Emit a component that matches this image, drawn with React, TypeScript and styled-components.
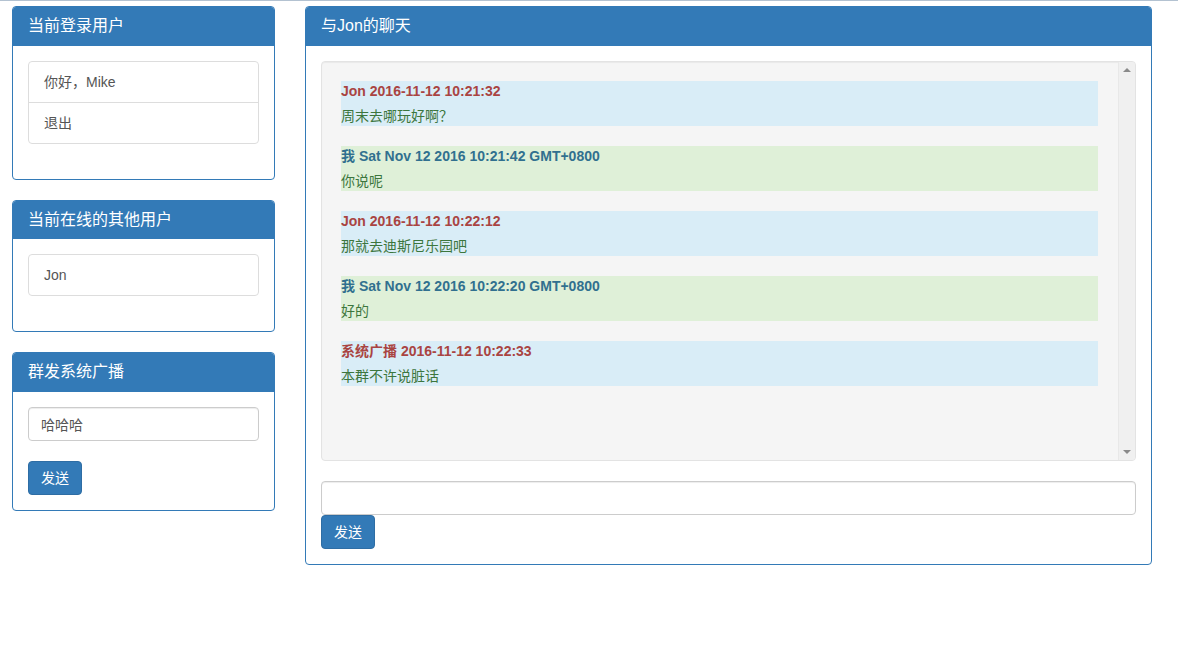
import React from "react";
import styled, { createGlobalStyle } from "styled-components";

const GlobalStyle = createGlobalStyle`
  * { box-sizing: border-box; }
  html, body { margin: 0; padding: 0; background: #fff; }
  body {
    border-top: 1px solid #b3c2d1;
    font-family: "Liberation Sans", Arial, "Noto Sans CJK SC", sans-serif;
    font-size: 14px;
    line-height: 20px;
    color: #333;
  }
`;

const Page = styled.div`
  display: flex;
  align-items: flex-start;
  gap: 30px;
  padding: 5px 0 0 12px;
`;

const Column = styled.div<{ $width: number }>`
  width: ${(p) => p.$width}px;
  display: flex;
  flex-direction: column;
  gap: 20px;
`;

const Panel = styled.div`
  border: 1px solid #337ab7;
  border-radius: 4px;
  background: #fff;
  overflow: hidden;
`;

const PanelHeading = styled.div<{ $height?: number }>`
  background: #337ab7;
  color: #fff;
  padding: 10px 15px;
  height: ${(p) => p.$height ?? 39}px;
  font-size: 16px;
  line-height: 18px;
  font-family: "Liberation Sans", Arial, "Noto Sans CJK SC", sans-serif;
`;

const PanelBody = styled.div`
  padding: 15px;
`;

const ListGroup = styled.div`
  border: 1px solid #ddd;
  border-radius: 4px;
  margin-bottom: 20px;
`;

const ListItem = styled.div`
  padding: 10px 15px;
  line-height: 20px;
  color: #555;
  & + & { border-top: 1px solid #ddd; }
`;

const TextInput = styled.input`
  display: block;
  width: 100%;
  height: 34px;
  padding: 6px 12px;
  font-size: 14px;
  font-family: "Liberation Sans", Arial, "Noto Sans CJK SC", sans-serif;
  color: #555;
  border: 1px solid #ccc;
  border-radius: 4px;
  box-shadow: inset 0 1px 1px rgba(0, 0, 0, 0.075);
  outline: none;
`;

const FormGroup = styled.div`
  margin-bottom: 20px;
`;

const Button = styled.button`
  display: block;
  height: 34px;
  padding: 6px 12px;
  font-size: 14px;
  line-height: 20px;
  font-family: "Liberation Sans", Arial, "Noto Sans CJK SC", sans-serif;
  color: #fff;
  background: #337ab7;
  border: 1px solid #2e6da4;
  border-radius: 4px;
`;

const Well = styled.div`
  display: flex;
  height: 400px;
  background: #f5f5f5;
  border: 1px solid #e3e3e3;
  border-radius: 4px;
  box-shadow: inset 0 1px 1px rgba(0, 0, 0, 0.05);
  margin-bottom: 20px;
  overflow: hidden;
`;

const MessageList = styled.div`
  flex: 1;
  padding: 19px 20px 19px 19px;
  display: flex;
  flex-direction: column;
  gap: 20px;
`;

const ScrollTrack = styled.div`
  width: 17px;
  background: #f0f0f0;
  border-left: 1px solid #e8e8e8;
  display: flex;
  flex-direction: column;
  justify-content: space-between;
  align-items: center;
  padding: 6px 0;
`;

const Arrow = styled.div<{ $down?: boolean }>`
  width: 0;
  height: 0;
  border-left: 4px solid transparent;
  border-right: 4px solid transparent;
  ${(p) =>
    p.$down
      ? "border-top: 4px solid #8a8a8a;"
      : "border-bottom: 4px solid #8a8a8a;"}
`;

const Message = styled.div<{ $kind: "info" | "success" }>`
  background: ${(p) => (p.$kind === "info" ? "#d9edf7" : "#dff0d8")};
  height: 45px;
`;

const MessageHead = styled.div<{ $kind: "info" | "success" }>`
  font-weight: bold;
  color: ${(p) => (p.$kind === "info" ? "#a94442" : "#31708f")};
  line-height: 20px;
  margin-bottom: 5px;
`;

const MessageBody = styled.div`
  color: #3c763d;
  line-height: 20px;
`;

const messages: { kind: "info" | "success"; head: string; body: string }[] = [
  { kind: "info", head: "Jon 2016-11-12 10:21:32", body: "周末去哪玩好啊？" },
  { kind: "success", head: "我 Sat Nov 12 2016 10:21:42 GMT+0800", body: "你说呢" },
  { kind: "info", head: "Jon 2016-11-12 10:22:12", body: "那就去迪斯尼乐园吧" },
  { kind: "success", head: "我 Sat Nov 12 2016 10:22:20 GMT+0800", body: "好的" },
  { kind: "info", head: "系统广播 2016-11-12 10:22:33", body: "本群不许说脏话" },
];

export default function App() {
  return (
    <>
      <GlobalStyle />
      <Page>
        <Column $width={263}>
          <Panel>
            <PanelHeading>当前登录用户</PanelHeading>
            <PanelBody>
              <ListGroup>
                <ListItem>你好，Mike</ListItem>
                <ListItem>退出</ListItem>
              </ListGroup>
            </PanelBody>
          </Panel>
          <Panel>
            <PanelHeading $height={38}>当前在线的其他用户</PanelHeading>
            <PanelBody>
              <ListGroup>
                <ListItem>Jon</ListItem>
              </ListGroup>
            </PanelBody>
          </Panel>
          <Panel>
            <PanelHeading>群发系统广播</PanelHeading>
            <PanelBody>
              <FormGroup>
                <TextInput defaultValue="哈哈哈" />
              </FormGroup>
              <Button>发送</Button>
            </PanelBody>
          </Panel>
        </Column>
        <Column $width={847}>
          <Panel>
            <PanelHeading>与Jon的聊天</PanelHeading>
            <PanelBody>
              <Well>
                <MessageList>
                  {messages.map((m, i) => (
                    <Message key={i} $kind={m.kind}>
                      <MessageHead $kind={m.kind}>{m.head}</MessageHead>
                      <MessageBody>{m.body}</MessageBody>
                    </Message>
                  ))}
                </MessageList>
                <ScrollTrack>
                  <Arrow />
                  <Arrow $down />
                </ScrollTrack>
              </Well>
              <TextInput />
              <Button>发送</Button>
            </PanelBody>
          </Panel>
        </Column>
      </Page>
    </>
  );
}
